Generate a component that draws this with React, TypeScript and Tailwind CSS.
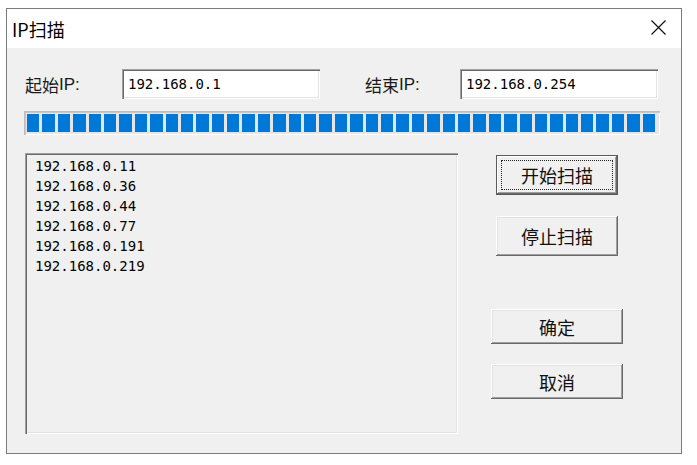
import React from 'react';

const mono = "font-['DejaVu_Sans_Mono','Noto_Sans_CJK_SC',monospace]";
const cjk = "font-['Noto_Sans_CJK_SC','Liberation_Sans',sans-serif]";

const sunken =
  'bg-white shadow-[inset_1px_1px_0_#a0a0a0,inset_2px_2px_0_#696969,inset_-1px_-1px_0_#ffffff,inset_-2px_-2px_0_#e3e3e3]';

const raised =
  'bg-[#f0f0f0] shadow-[inset_-1px_-1px_0_#696969,inset_1px_1px_0_#ffffff,inset_-2px_-2px_0_#a0a0a0,inset_2px_2px_0_#e3e3e3]';

const Label = ({ cn, width }: { cn: string; width: string }) => (
  <div className={`${width} flex items-center text-[#1a1a1a] ${cjk} text-[17px] leading-none`}>
    <span>{cn}</span>
    <span className="font-['Liberation_Sans',sans-serif] text-[17px]">IP:</span>
  </div>
);

const IpInput = ({ value }: { value: string }) => (
  <div className={`w-[198px] h-[30px] ${sunken} flex items-center pl-[6px] ${mono} text-[14px] text-black`}>
    {value}
  </div>
);

const Button = ({ label, className = '', focused = false }: { label: string; className?: string; focused?: boolean }) => (
  <div
    className={`relative flex items-center justify-center ${cjk} text-[18px] text-[#111] ${
      focused
        ? 'bg-[#f0f0f0] border border-[#5a5a5a] shadow-[inset_-1px_-1px_0_#696969,inset_1px_1px_0_#ffffff,inset_-2px_-2px_0_#a0a0a0]'
        : raised
    } ${className}`}
  >
    {focused && <div className="absolute inset-[4px] border border-dotted border-[#222]" />}
    <span className="leading-none">{label}</span>
  </div>
);

export default function App() {
  const found = ['192.168.0.11', '192.168.0.36', '192.168.0.44', '192.168.0.77', '192.168.0.191', '192.168.0.219'];
  const blocks = Array.from({ length: 41 });

  return (
    <div className="w-[697px] h-[465px] bg-white pt-[8px] pl-[6px]">
      <div className="w-[676px] h-[446px] border border-[#7a7a7a] flex flex-col">
        {/* title bar */}
        <div className="h-[39px] bg-white flex items-center justify-between pl-[5px] pr-[15px]">
          <span className={`${cjk} text-[18px] text-black leading-none`}>IP扫描</span>
          <svg width="15" height="15" viewBox="0 0 15 15" className="mt-[-2px]">
            <path d="M0.5 0.5 L14.5 14.5 M14.5 0.5 L0.5 14.5" stroke="#111" strokeWidth="1.2" />
          </svg>
        </div>

        {/* body */}
        <div className="flex-1 bg-[#f0f0f0] flex flex-col">
          <div className="mt-[21px] pl-[18px] flex items-center">
            <Label cn="起始" width="w-[97px]" />
            <IpInput value="192.168.0.1" />
            <div className="ml-[45px]">
              <Label cn="结束" width="w-[95px]" />
            </div>
            <IpInput value="192.168.0.254" />
          </div>

          {/* progress */}
          <div className="mt-[12px] ml-[17px] w-[636px] h-[24px] bg-[#e6e6e6] shadow-[inset_1px_1px_0_#bcbcbc,inset_2px_2px_0_#c8c8c8,inset_-1px_-1px_0_#ffffff] flex gap-[3px] pl-[3px] pr-[5px] py-[3px]">
            {blocks.map((_, i) => (
              <div key={i} className="flex-1 bg-[#0078d7]" />
            ))}
          </div>

          <div className="mt-[18px] ml-[18px] flex">
            <div className={`w-[433px] h-[281px] bg-[#f0f0f0] shadow-[inset_1px_1px_0_#a0a0a0,inset_2px_2px_0_#696969,inset_-1px_-1px_0_#ffffff,inset_-2px_-2px_0_#e3e3e3] pl-[10px] pt-[3px] ${mono} text-[14px] leading-[20px] text-black`}>
              {found.map((ip) => (
                <div key={ip}>{ip}</div>
              ))}
            </div>

            <div className="ml-[33px] w-[132px] flex flex-col">
              <Button label="开始扫描" focused className="ml-[5px] w-[122px] h-[40px] mt-[2px]" />
              <Button label="停止扫描" className="ml-[5px] w-[122px] h-[40px] mt-[21px]" />
              <Button label="确定" className="w-[132px] h-[35px] mt-[53px]" />
              <Button label="取消" className="w-[132px] h-[35px] mt-[20px]" />
            </div>
          </div>
        </div>
      </div>
    </div>
  );
}
